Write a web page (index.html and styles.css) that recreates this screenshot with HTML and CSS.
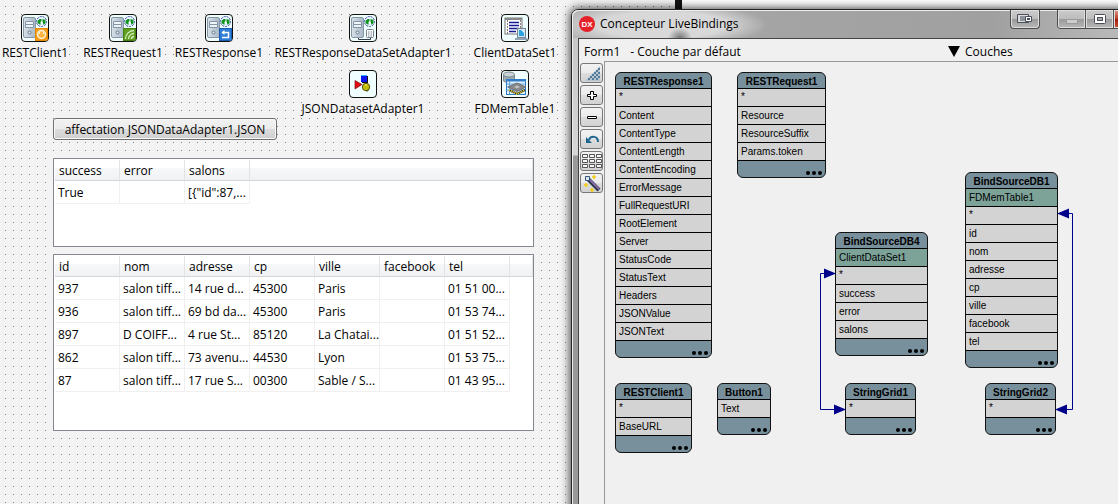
FILE: index.html
```html
<!DOCTYPE html>
<html lang="fr">
<head>
<meta charset="utf-8">
<title>Concepteur LiveBindings</title>
<link rel="stylesheet" href="styles.css">
</head>
<body>
<svg width="0" height="0" class="defs" aria-hidden="true">
  <defs>
    <linearGradient id="metal" x1="0" x2="1"><stop offset="0" stop-color="#d9e2ea"/><stop offset="1" stop-color="#a9b8c6"/></linearGradient>
    <symbol id="server" viewBox="0 0 26 26">
      <rect x="1.500" y="2.500" width="12" height="20" rx="1.500" fill="url(#metal)" stroke="#8796a5"/>
      <path d="M3 7.500h9M3 10.500h9" stroke="#f4f8fb" stroke-width="2"/>
      <path d="M3.500 6.500h8v3h-8zM3.500 9.500h8v3h-8z" fill="#eef3f7" stroke="#8494a4"/>
      <circle cx="7.500" cy="17.500" r="1.500" fill="#e6edf3" stroke="#62788c"/>
      <circle cx="19.500" cy="6.500" r="5" fill="#eaf4ff" stroke="#34489f" stroke-dasharray="2 1"/>
      <path d="M15.500 6l2-2h2v2l-1 1v3l-3-2zM20.500 4l3 1v3l-2 2-1-4z" fill="#10921c"/>
    </symbol>
  </defs>
</svg>
<main class="desktop">
  <section class="form" aria-label="Form1">
    <figure class="component c-client">
      <svg class="tile" viewBox="0 0 26 26"><use href="#server"/><rect x="13.500" y="13.500" width="12" height="12" fill="#f59c1a" stroke="#e58a00"/><circle cx="19.500" cy="19.500" r="4" fill="#ffb545" stroke="#fff3d8" stroke-width="1.500"/><path d="M17 18h1M21 18h1" stroke="#fff" stroke-width="1.500"/></svg>
      <figcaption>RESTClient1</figcaption>
    </figure>
    <figure class="component c-request">
      <svg class="tile" viewBox="0 0 26 26"><use href="#server"/><rect x="13.500" y="13.500" width="12" height="12" fill="#5f9e21" stroke="#45820e"/><path d="M15.500 24c0-5 4-8.500 8.500-8.500M18.500 24c0-3 2.500-5.500 5.500-5.500M21.500 24c0-1.500 1-2.500 2.500-2.500" fill="none" stroke="#d8efbf" stroke-width="1.300"/></svg>
      <figcaption>RESTRequest1</figcaption>
    </figure>
    <figure class="component c-response">
      <svg class="tile" viewBox="0 0 26 26"><use href="#server"/><rect x="13.500" y="13.500" width="12" height="12" fill="#2f7fd6" stroke="#1c5cb0"/><path d="M16 17.500h6.500v5H16" fill="none" stroke="#fff" stroke-width="1.500"/><path d="M18.500 15v5l-3-2.500z" fill="#fff"/></svg>
      <figcaption>RESTResponse1</figcaption>
    </figure>
    <figure class="component c-adapter">
      <svg class="tile" viewBox="0 0 26 26"><use href="#server"/><path d="M8.500 23v1.500h12V22" fill="none" stroke="#333d48"/><rect x="16.500" y="14.500" width="7" height="8" rx="1" fill="#fff" stroke="#76818e"/><path d="M18 17h4M18 19h4M18 21h4" stroke="#76818e" stroke-dasharray="1 .5"/></svg>
      <figcaption>RESTResponseDataSetAdapter1</figcaption>
    </figure>
    <figure class="component c-dataset">
      <svg class="tile" viewBox="0 0 26 26"><rect x="3" y="3" width="17" height="16" fill="#fff" stroke="#777"/><path d="M3 4h17" stroke="#888" stroke-width="2"/><path d="M5.500 5v14M18.500 5v14" stroke="#8b7f7f" stroke-dasharray="2 1"/><path d="M7 7.500h10M7 10.500h10M7 13.500h10M7 16.500h7" stroke="#131c93" stroke-width="1.500"/><rect x="15.500" y="13.500" width="8" height="9" fill="#d9e6ee" stroke="#70869a"/><rect x="17" y="15" width="5" height="6" fill="#2aa3e0"/><path d="M19 15h3v3z" fill="#d5f3ff"/><path d="M13 24h12" stroke="#93a3b3" stroke-width="2"/></svg>
      <figcaption>ClientDataSet1</figcaption>
    </figure>
    <figure class="component c-json">
      <svg class="tile" viewBox="0 0 26 26"><path d="M11 4h6v7h-6z" fill="#0b12ee"/><path d="M11 4.500h6" stroke="#27b6ff"/><path d="M17 5h1v7h-6v-1h5z" fill="#111"/><path d="M5 9.500l7 4-7 4.500z" fill="#e60a12" stroke="#77131a" stroke-width=".7"/><path d="M13 16l6 3-2 2z" fill="#555"/><circle cx="16" cy="16" r="3.700" fill="#c1bd08" stroke="#56550c"/><path d="M15 14h2" stroke="#ffff5c"/></svg>
      <figcaption>JSONDatasetAdapter1</figcaption>
    </figure>
    <figure class="component c-mem">
      <svg class="tile" viewBox="0 0 26 26"><path d="M1.500 4v6c2 2 9 2 11 0V4z" fill="#9daab0" stroke="#7c898f"/><ellipse cx="7" cy="3.500" rx="5.500" ry="2.500" fill="#cbd5d8" stroke="#7c898f"/><rect x="4.500" y="8.500" width="19" height="15" fill="#dff0fc" stroke="#317ec7"/><path d="M4 9.500h20" stroke="#317ec7" stroke-width="2"/><path d="M7.500 10v13M5 13h18M5 16h18M5 19h18" stroke="#66a6dd"/><path d="M7 19l8 4 8-4" fill="none" stroke="#202020" stroke-width="2"/><path d="M7 19l8 4 8-4" fill="none" stroke="#ffe638" stroke-width="2" stroke-dasharray="1 1"/><path d="M6 16l9-4 9 4-9 4.500z" fill="#87898a" stroke="#6c7072"/><path d="M12 16l3-1.500 3 1.500-3 1.500z" fill="#bfc2c3"/></svg>
      <figcaption>FDMemTable1</figcaption>
    </figure>

    <button type="button" class="form-button">affectation JSONDataAdapter1.JSON</button>

    <div class="grid grid-result">
      <table>
        <thead><tr><th>success</th><th>error</th><th>salons</th><td class="rest"></td></tr></thead>
        <tbody><tr><td>True</td><td></td><td>[{"id":87,...</td></tr></tbody>
      </table>
    </div>
    <div class="grid grid-salons">
      <table>
        <thead><tr><th>id</th><th>nom</th><th>adresse</th><th>cp</th><th>ville</th><th>facebook</th><th>tel</th><td class="rest"></td></tr></thead>
        <tbody>
          <tr><td>937</td><td>salon tiff...</td><td>14 rue d...</td><td>45300</td><td>Paris</td><td></td><td>01 51 00...</td></tr>
          <tr><td>936</td><td>salon tiff...</td><td>69 bd da...</td><td>45300</td><td>Paris</td><td></td><td>01 53 74...</td></tr>
          <tr><td>897</td><td>D COIFF...</td><td>4 rue St...</td><td>85120</td><td>La Chatai...</td><td></td><td>01 51 52...</td></tr>
          <tr><td>862</td><td>salon tiff...</td><td>73 avenu...</td><td>44530</td><td>Lyon</td><td></td><td>01 53 75...</td></tr>
          <tr><td>87</td><td>salon tiff...</td><td>17 rue S...</td><td>00300</td><td>Sable / S...</td><td></td><td>01 43 95...</td></tr>
        </tbody>
      </table>
    </div>
  </section>
  <div class="backdrop"></div>

  <section class="window" aria-label="Concepteur LiveBindings">
    <header class="titlebar">
      <svg class="logo" viewBox="0 0 16 16"><circle cx="8" cy="8" r="8" fill="#e52229"/><text x="8" y="11" text-anchor="middle" class="logo-text">DX</text></svg>
      <h1>Concepteur LiveBindings</h1>
      <button type="button" class="caption dock" aria-label="Ancrer"><svg viewBox="0 0 16 10" width="16" height="10"><path d="M.5.500h11v8H.5z" fill="#ddd" stroke="#4b4f5c"/><path d="M3 2h5v5H3z" fill="#8e929c"/><path d="M8.500 2.500h6v5h-6z" fill="#fff" stroke="#4b4f5c"/><path d="M10 5h3" stroke="#4b4f5c" stroke-width="2"/></svg></button>
      <div class="caption-group">
        <button type="button" class="caption" aria-label="Réduire"><svg viewBox="0 0 12 10" width="12" height="10"><rect x=".5" y="5.500" width="11" height="4" fill="#ccc" stroke="#999"/></svg></button>
        <button type="button" class="caption" aria-label="Agrandir"><svg viewBox="0 0 12 10" width="12" height="10"><rect x=".5" y=".5" width="11" height="9" rx="1" fill="#fff" stroke="#4b4f5c"/><rect x="3.500" y="3.500" width="5" height="3" fill="#aaa" stroke="#4b4f5c"/></svg></button>
        <button type="button" class="caption close" aria-label="Fermer"></button>
      </div>
    </header>
    <div class="client">
      <div class="layerbar">
        <span class="form-name">Form1</span><span class="layer-name">- Couche par défaut</span>
        <button type="button" class="layers"><svg viewBox="0 0 12 11" width="12" height="11"><path d="M0 0h12L6 11z"/></svg>Couches</button>
      </div>
      <div class="body">
        <nav class="tools" aria-label="Outils">
          <button type="button" aria-label="Zoom"><svg viewBox="0 0 18 18"><path d="M17 2v15H2z" fill="#b8c6d2"/><path d="M15 4h2v2h-2zM13 6h2v2h-2zM11 8h2v2h-2zM15 8h2v2h-2zM9 10h2v2H9zM13 10h2v2h-2zM7 12h2v2H7zM11 12h2v2h-2zM15 12h2v2h-2zM5 14h2v2H5zM9 14h2v2H9zM13 14h2v2h-2z" fill="#537a99"/></svg></button>
          <button type="button" aria-label="Agrandir la vue"><svg viewBox="0 0 18 18"><path d="M7.500 5.500h3v3h3v2h-3v3h-3v-3h-3v-2h3z" fill="#fff" stroke="#000"/></svg></button>
          <button type="button" aria-label="Réduire la vue"><svg viewBox="0 0 18 18"><path d="M4.500 8.500h9v2h-9z" fill="#fff" stroke="#000"/></svg></button>
          <button type="button" aria-label="Annuler"><svg viewBox="0 0 18 18"><path d="M6 10c1-4 9-5 9 2" fill="none" stroke="#1c668e" stroke-width="2"/><path d="M3 7v6h6z" fill="#1c668e"/></svg></button>
          <button type="button" aria-label="Disposition"><svg class="wide" viewBox="0 0 20 16"><g fill="#f8f8f8" stroke="#555"><path d="M.5 1.500h5v3h-5zM7.500 1.500h5v3h-5zM14.500 1.500h5v3h-5zM.5 6.500h5v3h-5zM7.500 6.500h5v3h-5zM14.500 6.500h5v3h-5zM.5 11.500h5v3h-5zM7.500 11.500h5v3h-5zM14.500 11.500h5v3h-5z"/></g></svg></button>
          <button type="button" aria-label="Assistant"><svg viewBox="0 0 18 18"><path d="M5 5l11 11" stroke="#27364a" stroke-width="4"/><path d="M7 6l9 9" stroke="#8b6ca5" stroke-width="2"/><path d="M2.500 2.500h4v4h-4z" fill="#dfe6ee" stroke="#31547c"/><path d="M11 1v4M9 3h4M3 9v4M1 11h4M9 14v4M7 16h4" stroke="#f1cc17" stroke-width="1.500"/></svg></button>
        </nav>
        <div class="canvas">
          <article class="node n-response"><h2>RESTResponse1</h2><ul><li class="star">*</li><li>Content</li><li>ContentType</li><li>ContentLength</li><li>ContentEncoding</li><li>ErrorMessage</li><li>FullRequestURI</li><li>RootElement</li><li>Server</li><li>StatusCode</li><li>StatusText</li><li>Headers</li><li>JSONValue</li><li>JSONText</li></ul><footer><i></i><i></i><i></i></footer></article>
          <article class="node n-request"><h2>RESTRequest1</h2><ul><li class="star">*</li><li>Resource</li><li>ResourceSuffix</li><li>Params.token</li></ul><footer><i></i><i></i><i></i></footer></article>
          <article class="node n-db4"><h2>BindSourceDB4</h2><ul><li class="source">ClientDataSet1</li><li class="star">*</li><li>success</li><li>error</li><li>salons</li></ul><footer><i></i><i></i><i></i></footer></article>
          <article class="node n-db1"><h2>BindSourceDB1</h2><ul><li class="source">FDMemTable1</li><li class="star">*</li><li>id</li><li>nom</li><li>adresse</li><li>cp</li><li>ville</li><li>facebook</li><li>tel</li></ul><footer><i></i><i></i><i></i></footer></article>
          <article class="node n-client"><h2>RESTClient1</h2><ul><li class="star">*</li><li>BaseURL</li></ul><footer><i></i><i></i><i></i></footer></article>
          <article class="node n-button"><h2>Button1</h2><ul><li>Text</li></ul><footer><i></i><i></i><i></i></footer></article>
          <article class="node n-grid1"><h2>StringGrid1</h2><ul><li class="star">*</li></ul><footer><i></i><i></i><i></i></footer></article>
          <article class="node n-grid2"><h2>StringGrid2</h2><ul><li class="star">*</li></ul><footer><i></i><i></i><i></i></footer></article>
          <svg class="links" width="300" height="220" viewBox="0 0 300 220">
            <g fill="none" stroke="#00008b"><path d="M20 65.500H5.500V201.500H26M247 5.500h10.500V201.500H246"/></g>
            <g fill="#00008b"><path d="M9 60.500v10l12-5zM19 196.500v10l12-5zM254 .5v10l-12-5zM252 196.500v10l-12-5z"/></g>
          </svg>
        </div>
      </div>
    </div>
  </section>
</main>
</body>
</html>
```
FILE: styles.css
```css
* { box-sizing: border-box; }
body {
  margin: 0;
  font: 12px/16px "Open Sans", "Noto Sans", sans-serif;
  color: #000;
}
button { font: inherit; color: inherit; margin: 0; }
.defs { position: absolute; }
.desktop { position: relative; height: 100vh; overflow: hidden; }

/* Form designer surface */
.form {
  height: 100%;
  background: linear-gradient(#f3f3f3 7px, transparent 0) 0 7px / 8px 8px,
    linear-gradient(90deg, #808080 1px, #f3f3f3 0) 5px 0 / 8px 8px;
}
.component {
  position: absolute;
  width: 180px;
  margin: 0;
  display: flex;
  flex-direction: column;
  align-items: center;
  gap: 3px;
}
.tile {
  width: 28px;
  height: 28px;
  border: 1px solid #111;
  border-radius: 4px;
  background: #f0ffff;
}
.component figcaption { background: #f3f3f3; }
.c-client { left: -55px; top: 14px; }
.c-request { left: 33px; top: 14px; }
.c-response { left: 129px; top: 14px; }
.c-adapter { left: 273px; top: 14px; }
.c-dataset { left: 425px; top: 14px; }
.c-json { left: 273px; top: 70px; }
.c-mem { left: 425px; top: 70px; }
.form-button {
  position: absolute;
  left: 53px;
  top: 118px;
  width: 224px;
  height: 22px;
  padding: 1px 0 0;
  border: 1px solid #707070;
  border-radius: 3px;
  background: linear-gradient(#f2f2f2, #ebebeb 50%, #ddd 50%, #cfcfcf);
  box-shadow: inset 0 0 0 1px #f9f9f9;
}
.grid {
  position: absolute;
  left: 53px;
  width: 481px;
  padding: 1px;
  border: 1px solid #828790;
  background: #fff;
}
.grid-result { top: 158px; height: 89px; }
.grid-salons { top: 254px; height: 177px; }
.grid table { width: 478px; table-layout: fixed; border-collapse: separate; border-spacing: 0; }
.grid th, .grid td {
  width: 65px;
  padding: 2px 0 0 3px;
  border: solid #f0f0f0;
  border-width: 0 1px 1px 0;
  text-align: left;
  font-weight: 400;
  white-space: nowrap;
}
.grid tbody td { height: 23px; }
.grid thead th, .grid thead td {
  height: 21px;
  padding-left: 4px;
  border-color: #e2e3e5 #e2e3e5 #d5d5d5;
  background: linear-gradient(#fff 40%, #f7f8fa 40%, #f1f2f4);
}
.grid thead .rest { width: auto; }

.backdrop {
  position: absolute;
  left: 675px;
  right: 0;
  top: 0;
  height: 20px;
  border-left: 7px solid #111;
  background: #fff;
}

/* Binding designer window */
.window {
  position: absolute;
  left: 571px;
  right: -46px;
  top: 9px;
  bottom: -10px;
  display: flex;
  flex-direction: column;
  padding-left: 6px;
  border: 1px solid #222;
  border-radius: 7px 7px 0 0;
  background: linear-gradient(#c4c4c4, #d6d6d6 145px, #999 146px);
  box-shadow: inset 1px 1px #eee, 0 0 10px 1px rgb(0 0 0 / 75%);
}
.titlebar {
  display: flex;
  align-items: flex-start;
  height: 28px;
  margin-left: -6px;
  padding: 0 6px 0 7px;
  border-radius: 6px 6px 0 0;
  box-shadow: inset 1px 1px #eee;
  background:
    radial-gradient(ellipse 12px 10px at 108px 28px, #777, transparent),
    radial-gradient(ellipse 105px 22px at 90px 15px, #d8d8d8 60%, transparent),
    linear-gradient(90deg, #b5b5b5, #a4a4a4 200px, #a0a0a0 420px, #c2c2c2);
}
.logo { width: 16px; height: 16px; margin-top: 6px; }
.logo-text { font: bold 8px "Liberation Sans", sans-serif; fill: #fff; }
h1 { margin: 6px auto 0 5px; font-size: 12px; line-height: 16px; font-weight: 400; }
.caption {
  display: flex;
  align-items: center;
  justify-content: center;
  width: 28px;
  height: 19px;
  padding: 0;
  border: 0;
  border-right: 1px solid #555;
  background: linear-gradient(#ccc, #bcbcbc 50%, #999 50%, #b9b9b9);
  box-shadow: inset 0 0 0 1px #ddd;
}
.dock, .caption-group { border: 1px solid #4c4c4c; border-top: 0; border-radius: 0 0 4px 4px; }
.dock { width: 30px; margin-right: 17px; }
.caption-group { display: flex; overflow: hidden; }
.caption-group .caption { height: 18px; }
.caption-group .close { width: 42px; border: 0; background: linear-gradient(#dd9a8b, #b93b25 50%, #9c1a08 50%, #c8553a); }
.client {
  flex: 1;
  display: flex;
  flex-direction: column;
  border: 1px solid #444;
  background: #f0f0f0;
}
.layerbar { display: flex; align-items: center; height: 22px; padding: 3px 0 0 5px; }
.layer-name { margin-left: 10px; }
.layers {
  position: absolute;
  left: 376px;
  display: flex;
  align-items: center;
  gap: 5px;
  padding: 0;
  border: 0;
  background: none;
}
.body { flex: 1; display: flex; }
.tools { display: flex; flex-direction: column; gap: 2px; width: 25px; padding: 2px 1px; }
.tools button {
  width: 23px;
  height: 20px;
  display: flex;
  align-items: center;
  justify-content: center;
  padding: 0;
  border: 1px solid #777;
  border-radius: 3px;
  background: linear-gradient(#f2f2f2, #ebebeb 50%, #ddd 50%, #d2d2d2);
}
.tools svg { width: 18px; height: 18px; }
.tools .wide { width: 20px; height: 16px; }
.canvas { position: relative; flex: 1; border: solid #999; border-width: 1px 0 0 1px; }
.links { position: absolute; left: 210px; top: 146px; }

.node {
  position: absolute;
  overflow: hidden;
  border: 1px solid #111;
  border-radius: 6px;
  background: #78909c;
  font: 10px/17px "Liberation Sans", Arial, sans-serif;
}
.node h2 { margin: 0; font-size: 10px; line-height: 17px; height: 15px; text-align: center; }
.node ul { margin: 0; padding: 0; list-style: none; border-bottom: 1px solid #000; }
.node li { height: 18px; padding-left: 3px; border-top: 1px solid #000; background: #d3d3d3; }
.node .star { line-height: 15px; }
.node .source { background: #7da399; }
.node footer { display: flex; justify-content: flex-end; align-items: flex-end; gap: 2px; height: 16px; padding: 0 3px 2px; }
.node i { width: 4px; height: 4px; border-radius: 2px; background: #000; }
.n-response { left: 10px; top: 10px; width: 97px; }
.n-request { left: 132px; top: 10px; width: 89px; }
.n-db4 { left: 230px; top: 170px; width: 93px; }
.n-db1 { left: 360px; top: 110px; width: 93px; }
.n-client { left: 10px; top: 321px; width: 77px; }
.n-button { left: 112px; top: 321px; width: 54px; }
.n-grid1 { left: 240px; top: 321px; width: 71px; }
.n-grid2 { left: 380px; top: 321px; width: 71px; }
```
